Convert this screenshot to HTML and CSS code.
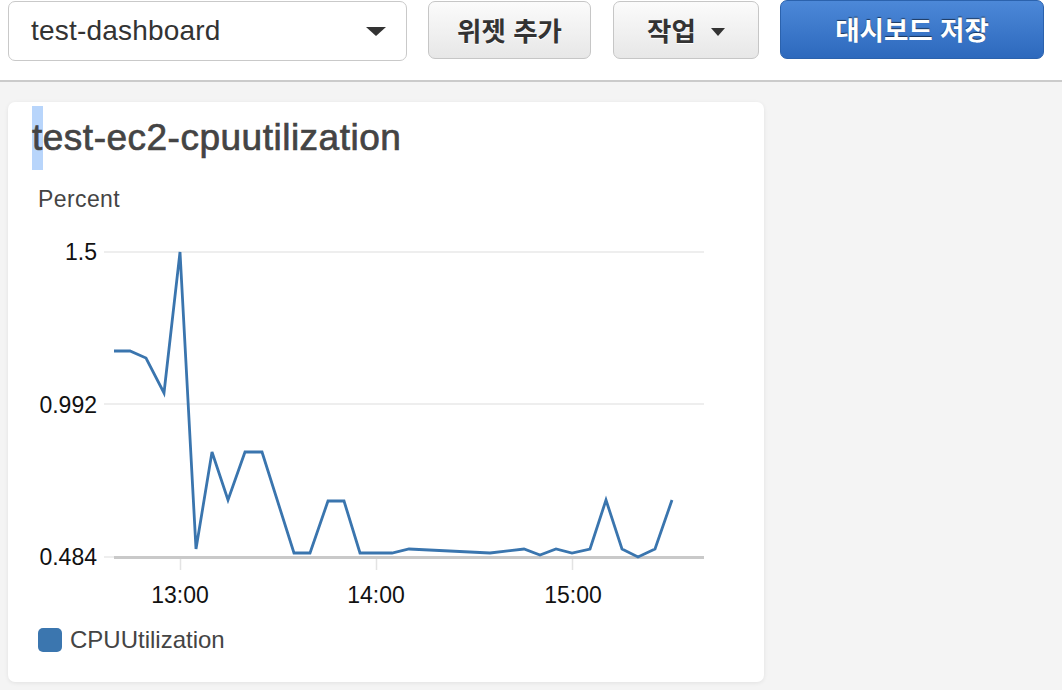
FILE: index.html
```html
<!DOCTYPE html>
<html lang="ko">
<head>
<meta charset="utf-8">
<title>test-dashboard</title>
<link rel="stylesheet" href="styles.css">
</head>
<body>
<header class="topbar">
  <div class="select">
    <span class="select-text">test-dashboard</span>
    <span class="caret"></span>
  </div>
  <button class="btn btn-gray btn-add">위젯 추가</button>
  <button class="btn btn-gray btn-actions">작업<span class="caret caret-small"></span></button>
  <button class="btn btn-primary">대시보드 저장</button>
</header>
<main class="main">
  <section class="card">
    <h1 class="title"><span class="sel">t</span>est-ec2-cpuutilization</h1>
    <div class="unit">Percent</div>
    <svg class="chart" width="756" height="400" viewBox="8 213 756 400" xmlns="http://www.w3.org/2000/svg">
      <g class="grid">
        <line x1="104" y1="252" x2="704" y2="252"/>
        <line x1="104" y1="404" x2="704" y2="404"/>
        <line x1="104" y1="557" x2="114" y2="557"/>
      </g>
      <line class="axis" x1="114" y1="557.5" x2="704" y2="557.5"/>
      <g class="ticks">
        <line x1="180.5" y1="559" x2="180.5" y2="570"/>
        <line x1="376.5" y1="559" x2="376.5" y2="570"/>
        <line x1="572.5" y1="559" x2="572.5" y2="570"/>
      </g>
      <g class="ylab">
        <text x="97" y="260">1.5</text>
        <text x="97" y="412.5">0.992</text>
        <text x="97" y="565">0.484</text>
      </g>
      <g class="xlab">
        <text x="180" y="603">13:00</text>
        <text x="376" y="603">14:00</text>
        <text x="573" y="603">15:00</text>
      </g>
      <polyline class="series" points="114,351 130,351 146,358 164,393 180,252 196,549 212,452 228,500 245,452 262,452 294,553 310,553 328,501 344,501 360,553 392,553 409,549 490,553 524,549 540,555 556,549 572,553 590,549 606,500 622,549 638,557 655,549 672,500"/>
    </svg>
    <div class="legend">
      <span class="swatch"></span>
      <span class="legend-text">CPUUtilization</span>
    </div>
  </section>
</main>
</body>
</html>
```
FILE: styles.css
```css
* { box-sizing: border-box; }
html, body { margin: 0; padding: 0; }
body {
  background: #f4f4f4;
  font-family: "Liberation Sans", Arial, "Noto Sans CJK KR", sans-serif;
  width: 1062px;
  height: 690px;
  overflow: hidden;
}
.topbar {
  background: #fff;
  height: 82px;
  border-bottom: 2px solid #cbcbcb;
  display: flex;
  align-items: flex-start;
  padding: 0 8px;
}
.select {
  margin-top: 1px;
  width: 399px;
  height: 60px;
  border: 1px solid #c9c9c9;
  border-radius: 7px;
  background: #fff;
  display: flex;
  align-items: center;
  justify-content: space-between;
  padding: 0 20px 0 22px;
}
.select-text {
  font-size: 28px;
  letter-spacing: 0.2px;
  color: #333;
}
.caret {
  display: inline-block;
  width: 0;
  height: 0;
  border-left: 10px solid transparent;
  border-right: 10px solid transparent;
  border-top: 9px solid #333;
}
.caret-small {
  border-left-width: 7.5px;
  border-right-width: 7.5px;
  border-top-width: 8px;
  margin-left: 15px;
  vertical-align: middle;
  position: relative;
  top: -2px;
}
.btn {
  font-family: "Noto Sans CJK KR", "Liberation Sans", sans-serif;
  font-weight: 700;
  font-size: 26.5px;
  border-radius: 7px;
  cursor: pointer;
  padding: 0;
  line-height: 1;
}
.btn-gray {
  margin-top: 1px;
  height: 58px;
  color: #333;
  border: 1px solid #c6c6c6;
  background: linear-gradient(#fbfbfb, #e7e7e7);
  text-shadow: 0 1px 0 #fff;
}
.btn-add { width: 163px; margin-left: 21px; }
.btn-actions { width: 146px; margin-left: 22px; }
.btn-primary {
  width: 264px;
  height: 59px;
  margin-left: 21px;
  color: #fff;
  border: 1px solid #2b62ad;
  background: linear-gradient(#4c88d8, #2d69bd);
  text-shadow: 0 -1px 1px rgba(0, 0, 0, 0.55);
}
.main {
  padding: 20px 0 0 8px;
}
.card {
  width: 756px;
  height: 580px;
  background: #fff;
  border-radius: 7px;
  box-shadow: 0 1px 4px rgba(0, 0, 0, 0.08);
  padding-top: 4px;
}
.title {
  margin: 0 0 0 24px;
  font-size: 37px;
  letter-spacing: 0.5px;
  font-weight: 400;
  color: #444;
  -webkit-text-stroke: 0.7px #444;
  line-height: 64px;
  height: 64px;
}
.sel {
  display: inline-block;
  background: #b8d5fb;
  height: 64px;
  vertical-align: top;
}
.unit {
  margin: 15px 0 0 30px;
  font-size: 23px;
  letter-spacing: 0.4px;
  line-height: 28px;
  color: #444;
}
.chart {
  display: block;
}
.grid line {
  stroke: #e9e9e9;
  stroke-width: 1.5;
}
.axis {
  stroke: #c9c9c9;
  stroke-width: 3;
}
.ticks line {
  stroke: #e3e3e3;
  stroke-width: 1.5;
}
.ylab text, .xlab text {
  font-family: "Liberation Sans", Arial, sans-serif;
  font-size: 23px;
  fill: #111;
}
.ylab text { text-anchor: end; }
.xlab text { text-anchor: middle; }
.series {
  fill: none;
  stroke: #3a75ae;
  stroke-width: 2.8;
  stroke-linejoin: miter;
}
.legend {
  margin: 15px 0 0 30px;
  display: flex;
  align-items: center;
  height: 24px;
}
.swatch {
  width: 24px;
  height: 24px;
  border-radius: 5px;
  background: #3b76af;
}
.legend-text {
  margin-left: 8px;
  font-size: 24px;
  color: #444;
  line-height: 24px;
}
```
